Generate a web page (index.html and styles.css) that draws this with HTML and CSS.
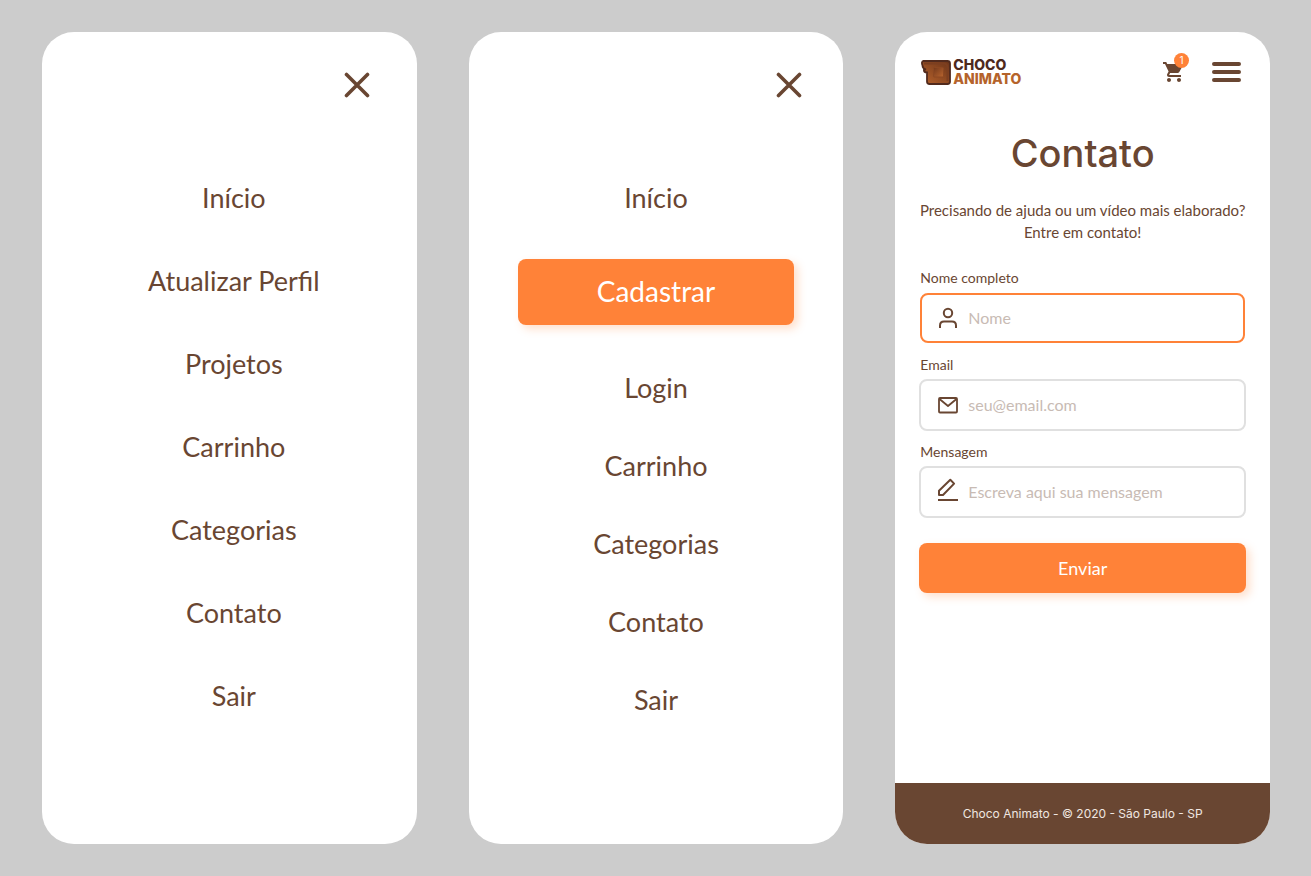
FILE: index.html
```html
<!DOCTYPE html>
<html lang="pt-BR">
<head>
<meta charset="utf-8">
<meta name="viewport" content="width=device-width, initial-scale=1">
<title>Choco Animato</title>
<link rel="stylesheet" href="styles.css">
</head>
<body>
<main class="board">
  <section class="screen">
    <div class="menu-top menu-top-user">
      <button class="icon-button" type="button" aria-label="Fechar menu">
        <svg width="26" height="26" viewBox="0 0 26 26"><path d="M2.500 2.500l21 21M23.500 2.500L2.500 23.500" fill="none" stroke="currentColor" stroke-width="3.600" stroke-linecap="round"/></svg>
      </button>
    </div>
    <nav class="menu menu-user">
      <a href="#">Início</a>
      <a href="#">Atualizar Perfil</a>
      <a href="#">Projetos</a>
      <a href="#">Carrinho</a>
      <a href="#">Categorias</a>
      <a href="#">Contato</a>
      <a href="#">Sair</a>
    </nav>
  </section>

  <section class="screen">
    <div class="menu-top">
      <button class="icon-button" type="button" aria-label="Fechar menu">
        <svg width="26" height="26" viewBox="0 0 26 26"><path d="M2.500 2.500l21 21M23.500 2.500L2.500 23.500" fill="none" stroke="currentColor" stroke-width="3.600" stroke-linecap="round"/></svg>
      </button>
    </div>
    <nav class="menu menu-guest">
      <a href="#">Início</a>
      <a class="menu-cta" href="#">Cadastrar</a>
      <a href="#">Login</a>
      <a href="#">Carrinho</a>
      <a href="#">Categorias</a>
      <a href="#">Contato</a>
      <a href="#">Sair</a>
    </nav>
  </section>

  <section class="screen">
    <header class="header">
      <a class="logo" href="#">
        <svg width="30" height="25" viewBox="0 0 30 25" aria-hidden="true">
          <defs>
            <linearGradient id="choco" x1="0" y1="1" x2="1" y2="0"><stop offset="0" stop-color="#b8632c"/><stop offset="1" stop-color="#6b3419"/></linearGradient>
            <linearGradient id="chip" x1="0" y1="0" x2="1" y2="1"><stop offset="0" stop-color="#75391b"/><stop offset="1" stop-color="#b8652f"/></linearGradient>
          </defs>
          <path d="M2.500 1H26.500Q29 1 29 3.500V21.500Q29 24 26.500 24H8.500Q6 24 6 21.500V12.500Q2.500 12.500 3 9.500H5Q1.500 8.500 1.500 5.500Q0 1.500 2.500 1Z" fill="url(#choco)" stroke="#512a1d" stroke-width="1.800"/>
          <path d="M3 3.500H23Q26 3.500 26.500 7V21" fill="none" stroke="#7c3f20" stroke-width="2"/>
          <rect x="12.500" y="7.500" width="10" height="9.500" rx="1" fill="url(#chip)" stroke="#8d4822"/>
        </svg>
        <span class="logo-text"><span>CHOCO</span><span class="logo-accent">ANIMATO</span></span>
      </a>
      <div class="header-actions">
        <button class="icon-button cart" type="button" aria-label="Carrinho, 1 item">
          <svg width="24" height="24" viewBox="0 0 24 24"><path fill="currentColor" d="M7 18c-1.100 0-1.990.9-1.990 2S5.900 22 7 22s2-.9 2-2-.9-2-2-2zM1 2v2h2l3.600 7.590-1.350 2.450c-.16.28-.25.61-.25.96 0 1.100.9 2 2 2h12v-2H7.420c-.14 0-.25-.11-.25-.25l.03-.12.9-1.630h7.450c.75 0 1.410-.41 1.750-1.030l3.580-6.490A1 1 0 0 0 20 4H5.210l-.94-2H1zm16 16c-1.100 0-1.990.9-1.990 2s.89 2 1.990 2 2-.9 2-2-.9-2-2-2z"/></svg>
          <span class="badge">1</span>
        </button>
        <button class="icon-button" type="button" aria-label="Abrir menu">
          <svg width="29" height="20" viewBox="0 0 29 20"><path d="M2 2h25M2 10h25M2 18h25" stroke="currentColor" stroke-width="4" stroke-linecap="round"/></svg>
        </button>
      </div>
    </header>

    <div class="contact">
      <h1 class="title">Contato</h1>
      <p class="intro">Precisando de ajuda ou um vídeo mais elaborado?<br>Entre em contato!</p>
      <form class="form">
        <div class="field">
          <label for="name">Nome completo</label>
          <div class="box box-active">
            <svg width="20" height="22" viewBox="0 0 20 22"><g fill="none" stroke="currentColor" stroke-width="2"><circle cx="10" cy="6" r="4.200"/><path d="M2 21v-2.500q0-4 4-4h8q4 0 4 4V21"/></g></svg>
            <input id="name" type="text" placeholder="Nome">
          </div>
        </div>
        <div class="field">
          <label for="email">Email</label>
          <div class="box">
            <svg width="20" height="22" viewBox="0 0 20 22"><g fill="none" stroke="currentColor" stroke-width="1.800" stroke-linejoin="round"><rect x="1" y="4" width="18" height="14.500" rx="1"/><path d="M1.500 5l8.500 7 8.500-7"/></g></svg>
            <input id="email" type="email" placeholder="seu@email.com">
          </div>
        </div>
        <div class="field">
          <label for="message">Mensagem</label>
          <div class="box">
            <svg class="pencil" width="20" height="24" viewBox="0 0 20 24"><path d="M1 17v-4.200L12.300 1.800l3.800 3.800L5 17zM0 22h20" fill="none" stroke="currentColor" stroke-width="2" stroke-linejoin="round"/></svg>
            <input id="message" type="text" placeholder="Escreva aqui sua mensagem">
          </div>
        </div>
        <button class="submit" type="submit">Enviar</button>
      </form>
    </div>
    <footer class="footer">Choco Animato - © 2020 - São Paulo - SP</footer>
  </section>
</main>
</body>
</html>
```
FILE: styles.css
```css
:root {
  --brown: #694632;
  --orange: #ff8238;
}

* { box-sizing: border-box; }

body {
  margin: 0;
  background: #ccc;
  color: var(--brown);
  font-family: Lato, sans-serif;
}

.board {
  display: grid;
  grid-template-columns: repeat(3, 1fr);
  gap: 52px;
  min-height: 100vh;
  padding: 32px 41px 32px 42px;
}

.screen {
  display: flex;
  flex-direction: column;
  overflow: hidden;
  background: #fff;
  border-radius: 32px;
}

.icon-button {
  display: block;
  padding: 0;
  border: 0;
  background: none;
  color: inherit;
  cursor: pointer;
}

svg { display: block; flex: none; }

.menu-top {
  display: flex;
  justify-content: flex-end;
  padding: 40px 41px 0;
}

.menu-top-user { padding-right: 47px; }

.menu {
  display: flex;
  flex-direction: column;
  align-items: center;
  padding: 83px 49px 0;
  font-size: 27px;
  line-height: 34px;
}

.menu a { color: inherit; text-decoration: none; }
.menu-user { gap: 49px; padding-right: 40px; }
.menu-guest { gap: 44px; }

.menu .menu-cta {
  align-self: stretch;
  margin-bottom: 2px;
  padding: 15px 16px 17px;
  border-radius: 8px;
  background: var(--orange);
  box-shadow: 4px 4px 8px rgba(255, 130, 56, 0.25);
  color: #fff;
  font-size: 28px;
  text-align: center;
}

.header {
  display: flex;
  align-items: center;
  justify-content: space-between;
  padding: 26px 29px 0 26px;
}

.logo {
  display: flex;
  align-items: center;
  gap: 2px;
  color: #4d291d;
  text-decoration: none;
}

.logo-text {
  display: flex;
  flex-direction: column;
  font: 800 14px/14px Inter, sans-serif;
}

.logo-accent { color: #b5632b; }

.header-actions {
  display: flex;
  align-items: center;
  gap: 26px;
}

.cart { position: relative; }

.badge {
  position: absolute;
  top: -7px;
  right: -3px;
  width: 15px;
  height: 15px;
  border-radius: 50%;
  background: var(--orange);
  color: #fff;
  font: 10px/15px Inter, sans-serif;
  text-align: center;
}

.contact { flex: 1; padding: 41px 16px 24px; }

.title {
  margin: 0;
  font: 500 38px/52px Inter, sans-serif;
  text-align: center;
}

.intro {
  margin: 20px 0 0;
  font-size: 15px;
  line-height: 22px;
  text-align: center;
}

.form {
  display: flex;
  flex-direction: column;
  gap: 11px;
  margin: 25px 8px 0;
}

.field {
  display: flex;
  flex-direction: column;
  gap: 4px;
}

.field label {
  padding-left: 1px;
  font-size: 14px;
  line-height: 20px;
}

.box {
  display: flex;
  align-items: center;
  gap: 10px;
  height: 52px;
  padding: 0 17px;
  border: 2px solid #e0e0e0;
  border-radius: 8px;
}

.box-active {
  height: 50px;
  margin: 1px;
  padding: 0 16px;
  border-color: var(--orange);
}

.pencil { margin-bottom: 4px; }

.box input {
  flex: 1;
  min-width: 0;
  padding: 0;
  border: 0;
  outline: 0;
  background: none;
  color: inherit;
  font: 16px/24px Lato, sans-serif;
}

.box input::placeholder { color: #c8bbb4; opacity: 1; }

.submit {
  height: 50px;
  margin-top: 14px;
  border: 0;
  border-radius: 8px;
  background: var(--orange);
  box-shadow: 4px 4px 8px rgba(255, 130, 56, 0.25);
  color: #fff;
  font: 18px/24px Lato, sans-serif;
  cursor: pointer;
}

.footer {
  padding: 20px;
  background: var(--brown);
  color: #f0e6e0;
  font: 12px/21px Inter, sans-serif;
  text-align: center;
}
```
